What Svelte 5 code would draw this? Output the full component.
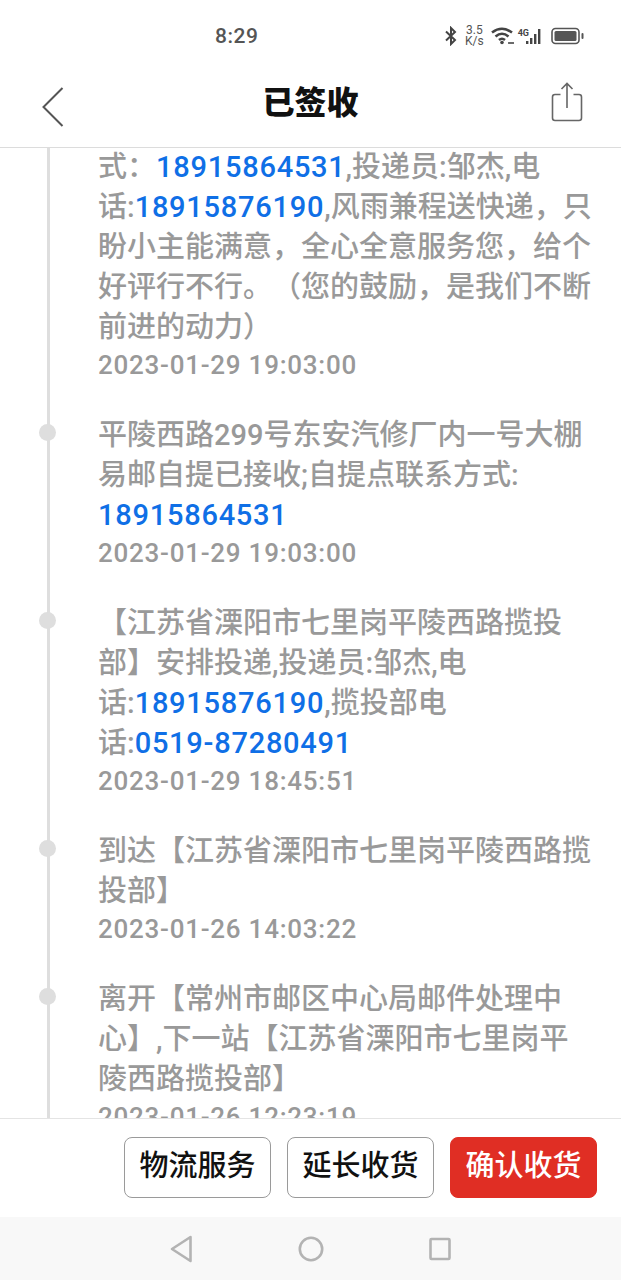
<script>
  const events = [
    {
      parts: [
        { t: '式：' },
        { t: '18915864531', link: true },
        { t: ',投递员:邹杰,电话:' },
        { t: '18915876190', link: true },
        { t: ',风雨兼程送快递，只盼小主能满意，全心全意服务您，给个好评行不行。（您的鼓励，是我们不断前进的动力）' }
      ],
      time: '2023-01-29 19:03:00',
      clipped: true
    },
    {
      parts: [
        // zero-width space lets the number drop to its own line
        { t: '平陵西路299号东安汽修厂内一号大棚易邮自提已接收;自提点联系方式:\u200b' },
        { t: '18915864531', link: true }
      ],
      time: '2023-01-29 19:03:00'
    },
    {
      parts: [
        { t: '【江苏省溧阳市七里岗平陵西路揽投部】安排投递,投递员:邹杰,电话:' },
        { t: '18915876190', link: true },
        { t: ',揽投部电话:' },
        { t: '0519-87280491', link: true }
      ],
      time: '2023-01-29 18:45:51'
    },
    {
      parts: [{ t: '到达【江苏省溧阳市七里岗平陵西路揽投部】' }],
      time: '2023-01-26 14:03:22'
    },
    {
      parts: [{ t: '离开【常州市邮区中心局邮件处理中心】,下一站【江苏省溧阳市七里岗平陵西路揽投部】' }],
      time: '2023-01-26 12:23:19'
    }
  ];
</script>

<div class="phone">
  <div class="status">
    <span class="clock">8:29</span>
    <div class="indicators">
      <svg width="14" height="20" viewBox="0 0 14 20" fill="none" stroke="#444" stroke-width="2">
        <path d="M2 5.5 L11 14 L7 18 V2 L11 6 L2 14.5" />
      </svg>
      <span class="speed">3.5<br />K/s</span>
      <svg width="24" height="20" viewBox="0 0 24 20" fill="none" stroke="#444" stroke-width="2.6">
        <path d="M1 6.5 Q11 -1 21 6.5" />
        <path d="M4.5 10.5 Q11 5 17.5 10.5" />
        <path d="M8 14 Q11 11.5 14 14" />
        <circle cx="11" cy="16.5" r="1.8" fill="#444" stroke="none" />
        <path d="M17 17 h6" stroke-width="1.6" />
      </svg>
      <div class="signal">
        <span class="net">4G</span>
        <svg width="18" height="17" viewBox="0 0 18 17" fill="#444">
          <rect x="0" y="13" width="2.4" height="3" />
          <rect x="4" y="10" width="2.4" height="6" />
          <rect x="8" y="6" width="2.4" height="10" />
          <rect x="12" y="1" width="2.4" height="15" />
        </svg>
      </div>
      <svg width="33" height="18" viewBox="0 0 33 18" fill="none">
        <rect x="1" y="1.5" width="27" height="15" rx="3.5" stroke="#555" stroke-width="1.6" />
        <rect x="3.5" y="4" width="22" height="10" rx="1.5" fill="#555" />
        <rect x="30.5" y="6" width="2" height="6" rx="1" fill="#555" />
      </svg>
    </div>
  </div>

  <header class="topbar">
    <svg class="back" width="24" height="42" viewBox="0 0 24 42" fill="none" stroke="#555" stroke-width="2">
      <path d="M21.5 2 L2.5 21 L21.5 40" />
    </svg>
    <h1>已签收</h1>
    <svg class="share" width="32" height="40" viewBox="0 0 32 40" fill="none" stroke="#666" stroke-width="1.6">
      <path d="M9.5 12.5 H4 Q1.5 12.5 1.5 15 V36 Q1.5 38.5 4 38.5 H28 Q30.5 38.5 30.5 36 V15 Q30.5 12.5 28 12.5 H22.5" />
      <path d="M16 26 V2 M10.5 7 L16 1.5 L21.5 7" />
    </svg>
  </header>

  <main class="track">
    {#each events as ev}
      <section class="event" class:clipped={ev.clipped}>
        {#if !ev.clipped}<span class="dot"></span>{/if}
        <p class="desc">
          {#each ev.parts as part}{#if part.link}<span class="link">{part.t}</span>{:else}{part.t}{/if}{/each}
        </p>
        <p class="time">{ev.time}</p>
      </section>
    {/each}
  </main>

  <div class="actions">
    <button>物流服务</button>
    <button>延长收货</button>
    <button class="primary">确认收货</button>
  </div>

  <nav class="softkeys">
    <svg width="26" height="28" viewBox="0 0 26 28" fill="none" stroke="#b3b3b3" stroke-width="2.6" stroke-linejoin="round">
      <path d="M21.5 2 L3 14 L21.5 26 Z" />
    </svg>
    <svg width="26" height="28" viewBox="0 0 26 28" fill="none" stroke="#b3b3b3" stroke-width="2.6">
      <circle cx="13" cy="14" r="11.2" />
    </svg>
    <svg width="26" height="28" viewBox="0 0 26 28" fill="none" stroke="#b3b3b3" stroke-width="2.6" stroke-linejoin="round">
      <rect x="3.5" y="4" width="19" height="20" rx="1" />
    </svg>
  </nav>
</div>

<style>
  :global(body) {
    margin: 0;
    background: #fff;
  }

  .phone {
    width: 621px;
    height: 1280px;
    display: flex;
    flex-direction: column;
    overflow: hidden;
    font-family: Roboto, "Noto Sans CJK SC", sans-serif;
    color: #111;
  }

  .status {
    height: 64px;
    flex: none;
    display: flex;
    align-items: center;
    justify-content: space-between;
    padding: 8px 37px 0 215px;
    box-sizing: border-box;
  }

  .clock {
    font-size: 21px;
    font-weight: 500;
    color: #555;
    letter-spacing: 0.5px;
  }

  .indicators {
    display: flex;
    align-items: center;
    gap: 7px;
    height: 24px;
  }

  .speed {
    font-size: 12px;
    line-height: 11px;
    color: #555;
    text-align: center;
  }

  .signal {
    display: flex;
    align-items: flex-end;
    margin-left: -4px;
  }

  .net {
    font-size: 9px;
    font-weight: 700;
    color: #444;
    align-self: flex-start;
    margin-right: -3px;
  }

  .topbar {
    height: 84px;
    flex: none;
    box-sizing: border-box;
    border-bottom: 1px solid #dcdcdc;
    display: flex;
    align-items: center;
    justify-content: space-between;
    padding: 0 38px 0 41px;
    position: relative;
  }

  .topbar h1 {
    position: absolute;
    left: 0;
    right: 0;
    margin: 0;
    text-align: center;
    font-size: 32px;
    font-weight: 900;
    color: #111;
    line-height: 44px;
    top: 17px;
  }

  .back {
    margin-top: 2px;
  }

  .share {
    margin-top: -8px;
  }

  .track {
    flex: 1;
    min-height: 0;
    overflow: hidden;
    position: relative;
    padding: 0 26px 0 98px;
  }

  .track::before {
    content: "";
    position: absolute;
    left: 47px;
    top: 0;
    bottom: 0;
    width: 3px;
    background: #dedede;
  }

  .event {
    position: relative;
    margin-bottom: 32px;
    color: #999;
    font-weight: 500;
  }

  .dot {
    position: absolute;
    left: -59px;
    top: 9px;
    width: 17px;
    height: 17px;
    border-radius: 50%;
    background: #dedede;
  }

  .desc {
    margin: 0;
    font-size: 29px;
    line-height: 40px;
    text-spacing-trim: space-all;
  }

  .time {
    margin: 0;
    font-size: 26px;
    line-height: 36px;
    letter-spacing: 0.75px;
  }

  .link {
    color: #0f6fe6;
    letter-spacing: 0.75px;
    white-space: nowrap;
  }

  .clipped .desc {
    margin-top: -1px;
  }

  .actions {
    height: 99px;
    flex: none;
    box-sizing: border-box;
    border-top: 1px solid #e4e4e4;
    background: #fff;
    display: flex;
    justify-content: flex-end;
    align-items: flex-start;
    gap: 16px;
    padding: 18px 24px 0 0;
  }

  .actions button {
    width: 147px;
    height: 61px;
    border: 1px solid #9a9a9a;
    border-radius: 8px;
    background: #fff;
    font: inherit;
    font-size: 29px;
    font-weight: 500;
    line-height: 40px;
    color: #111;
    padding: 0 0 3px;
  }

  .actions .primary {
    background: #e02e24;
    border-color: #e02e24;
    color: #fff;
  }

  .softkeys {
    height: 63px;
    flex: none;
    background: #f8f8f8;
    display: flex;
    justify-content: center;
    align-items: center;
    gap: 103px;
  }
</style>
